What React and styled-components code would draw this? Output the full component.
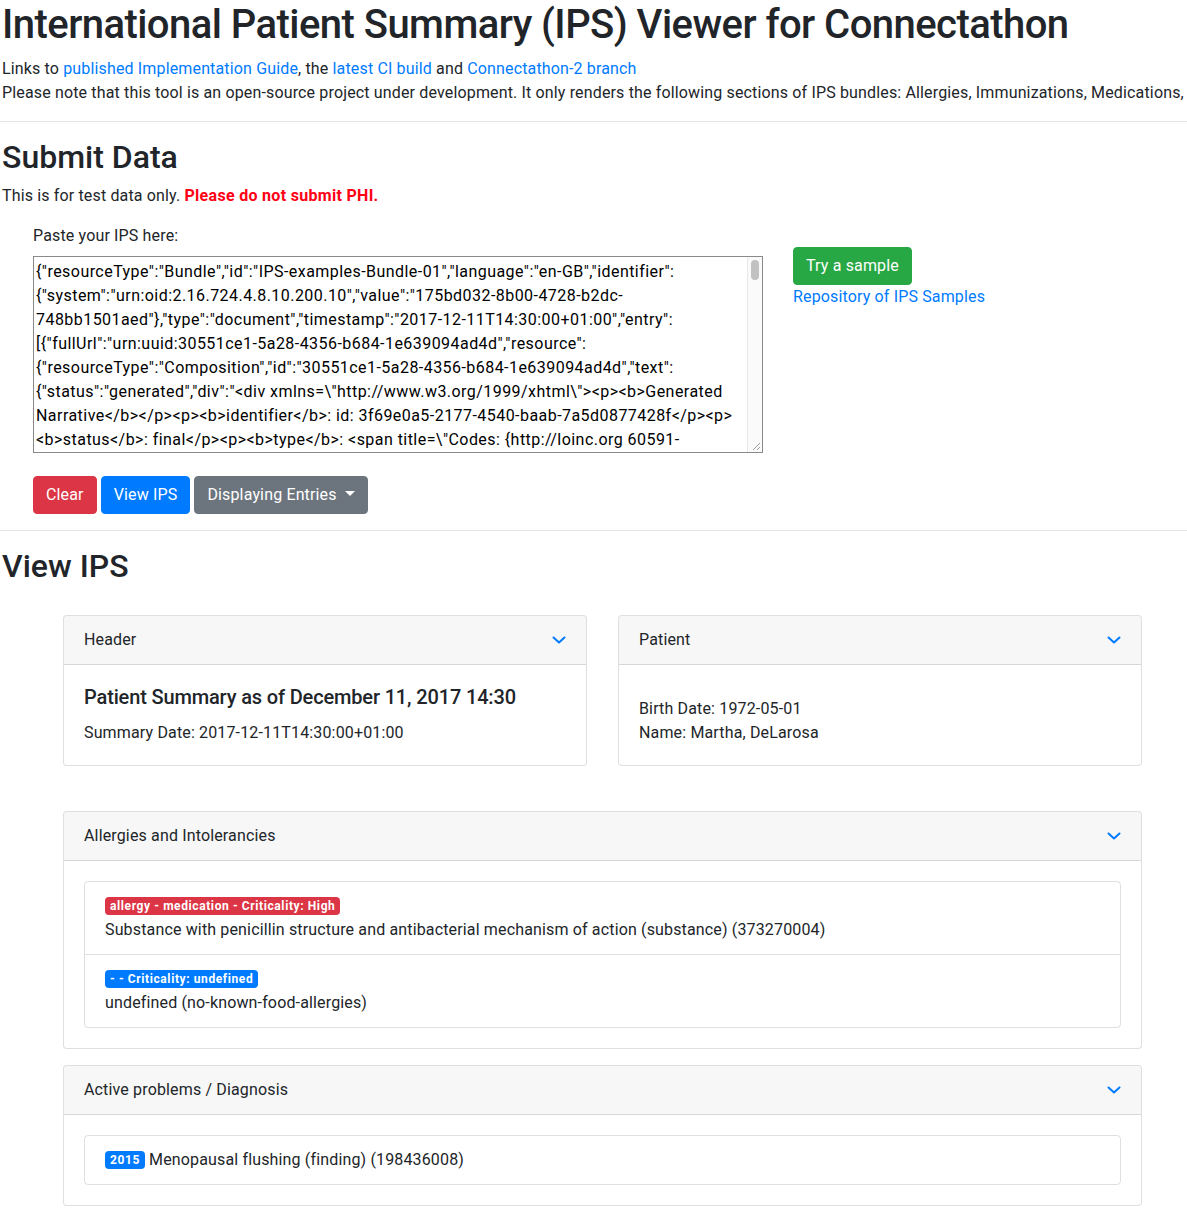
import React from "react";
import styled, { createGlobalStyle } from "styled-components";

const GlobalStyle = createGlobalStyle`
  body {
    margin: 0;
    font-family: Roboto, "Noto Sans", sans-serif;
    font-size: 16px;
    line-height: 1.5;
    letter-spacing: 0.15px;
    color: #212529;
    background: #fff;
  }
  * { box-sizing: border-box; }
`;

const Page = styled.div`
  padding: 1px 0 26px 2px;
  overflow-x: hidden;
`;

const Title = styled.h1`
  font-size: 40px;
  font-weight: 500;
  line-height: 1.2;
  letter-spacing: -0.55px;
  margin: 0 0 8px;
`;

const Line = styled.div`
  white-space: nowrap;
`;

const Link = styled.a`
  color: #007bff;
  text-decoration: none;
`;

const Rule = styled.hr`
  border: 0;
  border-top: 1px solid rgba(0, 0, 0, 0.1);
  margin: 16px 0 16px -2px;
`;

const SectionTitle = styled.h2`
  font-size: 32px;
  font-weight: 500;
  line-height: 1.2;
  letter-spacing: 0;
  margin: 0 0 8px;
`;

const Note = styled.p`
  margin: 0 0 16px;
`;

const Warning = styled.strong`
  color: #ff0014;
  font-weight: 700;
  letter-spacing: 0.3px;
`;

const FormRow = styled.div`
  display: flex;
  padding-left: 31px;
  gap: 30px;
`;

const FormCol = styled.div`
  display: flex;
  flex-direction: column;
`;

const SideCol = styled.div`
  display: flex;
  flex-direction: column;
  align-items: flex-start;
  padding-top: 23px;
`;

const Label = styled.label`
  display: block;
  margin-bottom: 8px;
`;

const AreaWrap = styled.div`
  position: relative;
  width: 730px;
  height: 197px;
`;

const JsonArea = styled.textarea`
  display: block;
  width: 100%;
  height: 100%;
  margin: 0;
  padding: 3px 15px 1px 2px;
  border: 1px solid #8a8a8a;
  font-family: Roboto, "Noto Sans", sans-serif;
  font-size: 16px;
  line-height: 24px;
  letter-spacing: 0.45px;
  color: #000;
  white-space: pre-wrap;
  overflow: hidden;
  resize: none;
  outline: none;
`;

/* drawn scrollbar track, thumb and resize grip over the textarea */
const Track = styled.div`
  position: absolute;
  top: 1px;
  right: 1px;
  bottom: 1px;
  width: 15px;
  background: #fafafa;
  border-left: 1px solid #e8e8e8;
`;

const Thumb = styled.div`
  position: absolute;
  top: 3px;
  left: 3px;
  width: 8px;
  height: 20px;
  border-radius: 4px;
  background: #c2c2c2;
`;

const Grip = styled.svg`
  position: absolute;
  right: 2px;
  bottom: 2px;
`;

const ButtonRow = styled.div`
  display: flex;
  gap: 4px;
  margin-top: 23px;
`;

const colors = {
  danger: "#dc3545",
  primary: "#007bff",
  secondary: "#6c757d",
  success: "#28a745",
};

const Button = styled.button`
  font-family: inherit;
  font-size: 16px;
  line-height: 24px;
  letter-spacing: inherit;
  padding: 6px 12px;
  border: 1px solid ${(p) => colors[p.$variant]};
  border-radius: 4px;
  background: ${(p) => colors[p.$variant]};
  color: #fff;
  cursor: pointer;
  white-space: nowrap;

  ${(p) =>
    p.$caret &&
    `
    &::after {
      content: "";
      display: inline-block;
      margin-left: 8px;
      vertical-align: 4px;
      border-top: 5px solid #fff;
      border-left: 5px solid transparent;
      border-right: 5px solid transparent;
    }
  `}
`;

const Cards = styled.div`
  width: 1079px;
  margin: 29px 0 0 61px;
  display: flex;
  flex-direction: column;
`;

const CardRow = styled.div`
  display: grid;
  grid-template-columns: 524px 524px;
  gap: 31px;
  margin-bottom: 45px;
`;

const Card = styled.div`
  border: 1px solid rgba(0, 0, 0, 0.125);
  border-radius: 4px;
  background: #fff;
  margin-bottom: ${(p) => p.$gap || 0}px;
  overflow: hidden;
`;

const CardHeader = styled.div`
  display: flex;
  justify-content: space-between;
  align-items: center;
  padding: 12px 20px;
  background: rgba(0, 0, 0, 0.03);
  border-bottom: 1px solid rgba(0, 0, 0, 0.125);
`;

const CardBody = styled.div`
  padding: ${(p) => p.$top || 20}px 20px 20px;
`;

const CardTitle = styled.h5`
  font-size: 20px;
  font-weight: 500;
  line-height: 1.2;
  letter-spacing: -0.15px;
  margin: 0 0 12px;
`;

const ListGroup = styled.div`
  border: 1px solid rgba(0, 0, 0, 0.125);
  border-radius: 4px;
`;

const ListItem = styled.div`
  padding: 12px 20px;
  & + & {
    border-top: 1px solid rgba(0, 0, 0, 0.125);
  }
`;

const Badge = styled.span`
  display: inline-block;
  padding: 3px 5px;
  font-size: 12px;
  font-weight: 700;
  line-height: 1;
  letter-spacing: 0.6px;
  border-radius: 4px;
  color: #fff;
  background: ${(p) => colors[p.$variant]};
  vertical-align: 1px;
`;

const Chevron = () => (
  <svg width="14" height="14" viewBox="0 0 14 14">
    <polyline
      points="1.5,4.5 7,9.5 12.5,4.5"
      fill="none"
      stroke="#007bff"
      strokeWidth="2"
      strokeLinecap="round"
      strokeLinejoin="round"
    />
  </svg>
);

const Section = ({ title, children, gap, top }) => (
  <Card $gap={gap}>
    <CardHeader>
      <span>{title}</span>
      <Chevron />
    </CardHeader>
    <CardBody $top={top}>{children}</CardBody>
  </Card>
);

const sample =
  '{"resourceType":"Bundle","id":"IPS-examples-Bundle-01","language":"en-GB","identifier":\n' +
  '{"system":"urn:oid:2.16.724.4.8.10.200.10","value":"175bd032-8b00-4728-b2dc-\n' +
  '748bb1501aed"},"type":"document","timestamp":"2017-12-11T14:30:00+01:00","entry":\n' +
  '[{"fullUrl":"urn:uuid:30551ce1-5a28-4356-b684-1e639094ad4d","resource":\n' +
  '{"resourceType":"Composition","id":"30551ce1-5a28-4356-b684-1e639094ad4d","text":\n' +
  '{"status":"generated","div":"<div xmlns=\\"http://www.w3.org/1999/xhtml\\"><p><b>Generated\n' +
  "Narrative</b></p><p><b>identifier</b>: id: 3f69e0a5-2177-4540-baab-7a5d0877428f</p><p>\n" +
  '<b>status</b>: final</p><p><b>type</b>: <span title=\\"Codes: {http://loinc.org 60591-\n' +
  '5}\\">Patient summary Document</span></p><p><b>date</b>: 2017-12-11 02:30:00+0100</p><p><b>author</b>: <a href=\\"#Practitioner_98315ba9-ffea-41ef-b59b-a836c039858f\\">See above (Practitioner/98315ba9-ffea-41ef-b59b-a836c039858f)</a></p><p><b>title</b>: Patient Summary as of December 11, 2017 14:30</p><p><b>confidentiality</b>: N</p></div>"},"identifier":{"system":"urn:oid:2.16.724.4.8.10.200.10","value":"3f69e0a5-2177-4540-baab-7a5d0877428f"},"status":"final","type":{"coding":[{"system":"http://loinc.org","code":"60591-5","display":"Patient summary Document"}]},"subject":{"reference":"Patient/2b90dd2b-2dab-4c75-9bb9-a355e07401e8"},"date":"2017-12-11T14:30:00+01:00"}}]}';

export default function App() {
  return (
    <Page>
      <GlobalStyle />
      <Title>International Patient Summary (IPS) Viewer for Connectathon</Title>
      <Line>
        Links to <Link href="#">published Implementation Guide</Link>, the{" "}
        <Link href="#">latest CI build</Link> and{" "}
        <Link href="#">Connectathon-2 branch</Link>
      </Line>
      <Line>
        Please note that this tool is an open-source project under development. It only renders
        the following sections of IPS bundles: Allergies, Immunizations, Medications,
      </Line>
      <Rule />

      <SectionTitle>Submit Data</SectionTitle>
      <Note>
        This is for test data only. <Warning>Please do not submit PHI.</Warning>
      </Note>
      <FormRow>
        <FormCol>
          <Label htmlFor="ips">Paste your IPS here:</Label>
          <AreaWrap>
            <JsonArea id="ips" defaultValue={sample} spellCheck={false} />
            <Track>
              <Thumb />
            </Track>
            <Grip width="10" height="10" viewBox="0 0 10 10">
              <path d="M9 2 L2 9 M9 6 L6 9" stroke="#9a9a9a" strokeWidth="1" />
            </Grip>
          </AreaWrap>
          <ButtonRow>
            <Button $variant="danger">Clear</Button>
            <Button $variant="primary">View IPS</Button>
            <Button $variant="secondary" $caret>
              Displaying Entries
            </Button>
          </ButtonRow>
        </FormCol>
        <SideCol>
          <Button $variant="success">Try a sample</Button>
          <Link href="#">Repository of IPS Samples</Link>
        </SideCol>
      </FormRow>
      <Rule />

      <SectionTitle>View IPS</SectionTitle>
      <Cards>
        <CardRow>
          <Section title="Header">
            <CardTitle>Patient Summary as of December 11, 2017 14:30</CardTitle>
            <div>Summary Date: 2017-12-11T14:30:00+01:00</div>
          </Section>
          <Section title="Patient" top={32}>
            <div>Birth Date: 1972-05-01</div>
            <div>Name: Martha, DeLarosa</div>
          </Section>
        </CardRow>

        <Section title="Allergies and Intolerancies" gap={16}>
          <ListGroup>
            <ListItem>
              <div>
                <Badge $variant="danger">allergy - medication - Criticality: High</Badge>
              </div>
              <div>
                Substance with penicillin structure and antibacterial mechanism of action
                (substance) (373270004)
              </div>
            </ListItem>
            <ListItem>
              <div>
                <Badge $variant="primary">- - Criticality: undefined</Badge>
              </div>
              <div>undefined (no-known-food-allergies)</div>
            </ListItem>
          </ListGroup>
        </Section>

        <Section title="Active problems / Diagnosis">
          <ListGroup>
            <ListItem>
              <Badge $variant="primary">2015</Badge> Menopausal flushing (finding) (198436008)
            </ListItem>
          </ListGroup>
        </Section>
      </Cards>
    </Page>
  );
}
